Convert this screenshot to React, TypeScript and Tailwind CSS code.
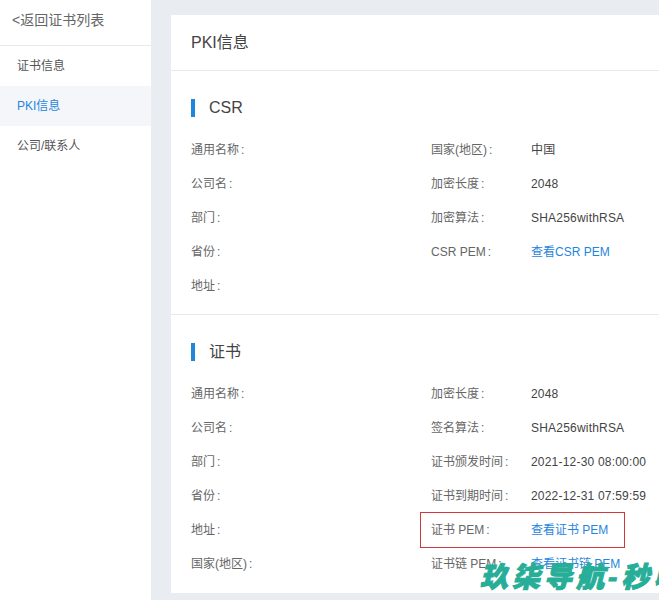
const font = { fontFamily: '"Liberation Sans","Noto Sans CJK SC",sans-serif' };

function Row({ label, value, link }: { label: string; value?: string; link?: boolean }) {
  return (
    <div className="flex h-[34px] items-center text-xs">
      <span className="w-[100px] shrink-0 whitespace-nowrap text-[#666]">
        {label}
        <span className="ml-[2px]">:</span>
      </span>
      {value && (
        <span className={`whitespace-nowrap ${link ? "text-[#1f86dc]" : "tracking-[0.2px] text-[#444]"}`}>{value}</span>
      )}
    </div>
  );
}

function Section({ title, left, right, className }: { title: string; left: string[]; right: [string, string, boolean?][]; className: string }) {
  return (
    <section className={className}>
      <div className="flex h-[18px] items-center">
        <div className="h-[18px] w-1 bg-[#1f86dc]" />
        <h2 className="ml-[14px] text-base leading-none text-[#444]">{title}</h2>
      </div>
      <div className="mt-[16px] flex">
        <div className="w-[240px] shrink-0">
          {left.map((l) => <Row key={l} label={l} />)}
        </div>
        <div className="shrink-0">
          {right.map(([l, v, k]) => <Row key={l} label={l} value={v} link={k} />)}
        </div>
      </div>
    </section>
  );
}

export default function App() {
  return (
    <div style={font} className="relative flex h-[600px] w-[659px] overflow-hidden bg-[#e9edf1]">
      <aside className="h-full w-[151px] shrink-0 bg-white">
        <div className="flex h-[46px] items-center border-b border-[#e8eaec] pb-[5px] pl-3 text-sm text-[#666]">&lt;返回证书列表</div>
        <nav className="text-xs">
          <div className="flex h-10 items-center pl-[17px] text-[#555]">证书信息</div>
          <div className="flex h-10 items-center bg-[#f4f6f9] pl-[17px] text-[#1f86dc]">PKI信息</div>
          <div className="flex h-10 items-center pl-[17px] text-[#555]">公司/联系人</div>
        </nav>
      </aside>
      <main className="ml-5 mt-[15px] h-[578px] w-[520px] shrink-0 bg-white">
        <div className="flex h-[56px] items-center border-b border-[#e8eaec] pl-5 text-base text-[#444]">PKI信息</div>
        <Section
          className="h-[244px] border-b border-[#e8eaec] px-5 pt-[28px]"
          title="CSR"
          left={["通用名称", "公司名", "部门", "省份", "地址"]}
          right={[["国家(地区)", "中国"], ["加密长度", "2048"], ["加密算法", "SHA256withRSA"], ["CSR PEM", "查看CSR PEM", true]]}
        />
        <Section
          className="px-5 pt-[28px]"
          title="证书"
          left={["通用名称", "公司名", "部门", "省份", "地址", "国家(地区)"]}
          right={[["加密长度", "2048"], ["签名算法", "SHA256withRSA"], ["证书颁发时间", "2021-12-30 08:00:00"], ["证书到期时间", "2022-12-31 07:59:59"], ["证书 PEM", "查看证书 PEM", true], ["证书链 PEM", "查看证书链 PEM", true]]}
        />
      </main>
      <div className="absolute left-[420px] top-[512px] h-[36px] w-[205px] border border-[#d0393e]" />
      <div className="absolute left-[480px] top-[559px] whitespace-nowrap text-[28px] font-black italic leading-[38px] tracking-[4px] text-[#27ae98] [-webkit-text-stroke:1px_#27ae98]">玖柒导航-秒收</div>
    </div>
  );
}
